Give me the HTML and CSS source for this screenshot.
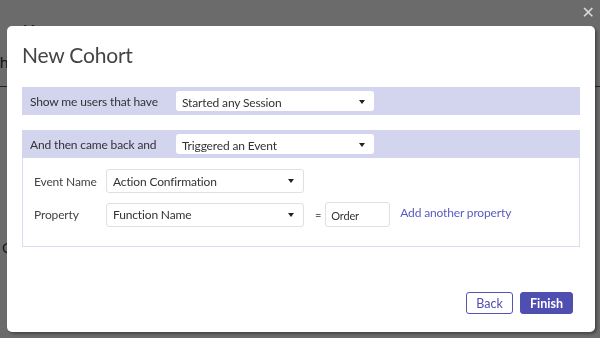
FILE: index.html
```html
<!DOCTYPE html>
<html lang="en">
<head>
    <meta charset="UTF-8">
    <meta name="viewport" content="width=device-width, initial-scale=1.0">
    <title>New Cohort</title>
    <link rel="stylesheet" href="styles.css">
</head>
<body>
    <div class="page">
        <div class="page-top">Y</div>
        <div class="page-row">th</div>
        <div class="page-foot">C</div>
    </div>
    <div class="overlay">
        <span class="close">&#x2715;</span>
        <div class="modal">
            <h1>New Cohort</h1>

            <div class="band">
                <span class="band-label">Show me users that have</span>
                <div class="select select-sm">
                    <span>Started any Session</span>
                    <span class="caret"></span>
                </div>
            </div>

            <div class="group">
                <div class="band">
                    <span class="band-label">And then came back and</span>
                    <div class="select select-sm">
                        <span>Triggered an Event</span>
                        <span class="caret"></span>
                    </div>
                </div>
                <div class="group-body">
                    <div class="field">
                        <span class="field-label">Event Name</span>
                        <div class="select select-lg">
                            <span>Action Confirmation</span>
                            <span class="caret"></span>
                        </div>
                    </div>
                    <div class="field">
                        <span class="field-label">Property</span>
                        <div class="select select-lg">
                            <span>Function Name</span>
                            <span class="caret"></span>
                        </div>
                        <span class="equals">=</span>
                        <div class="text-input">Order</div>
                        <a class="link" href="#">Add another property</a>
                    </div>
                </div>
            </div>

            <div class="footer">
                <button class="btn btn-outline">Back</button>
                <button class="btn btn-primary">Finish</button>
            </div>
        </div>
    </div>
</body>
</html>
```

FILE: styles.css
```css
body {
    margin: 0;
    font-family: Lato, "Open Sans", sans-serif;
    background-color: #fff;
    color: #333;
    overflow: hidden;
}
.page {
    height: 338px;
    color: #222;
    font-size: 16px;
}
.page-top {
    padding: 22px 0 0 24px;
    height: 28px;
    line-height: 16px;
}
.page-row {
    height: 36px;
    margin-left: -6px;
    border-bottom: 1px solid #555;
    line-height: 24px;
    color: #333;
}
.page-foot {
    margin-top: 152px;
    margin-left: 2px;
    font-size: 14px;
    color: #333;
}
.overlay {
    position: fixed;
    inset: 0;
    background-color: rgba(0, 0, 0, 0.58);
    padding: 26px 5px 6px 7px;
}
.close {
    position: absolute;
    top: 3px;
    right: 5px;
    color: #dadada;
    font-size: 16px;
    font-weight: bold;
    font-family: "DejaVu Sans", sans-serif;
}
.modal {
    background-color: #fff;
    border-radius: 5px;
    height: 306px;
    box-sizing: border-box;
    padding: 14px 15px 18px 15px;
    display: flex;
    flex-direction: column;
    box-shadow: 2px 2px 3px rgba(0, 0, 0, 0.35);
}
h1 {
    margin: 0 0 17px 0;
    font-size: 21px;
    line-height: 30px;
    letter-spacing: -0.2px;
    font-weight: normal;
    color: #444;
}
.band {
    background-color: #d3d4ed;
    display: flex;
    align-items: center;
    padding: 4px 0 4px 8px;
    height: 20px;
}
.band-label {
    width: 146px;
    font-size: 12px;
    letter-spacing: -0.15px;
    color: #333;
}
.select {
    background-color: #fff;
    border-radius: 3px;
    display: flex;
    align-items: center;
    justify-content: space-between;
    box-sizing: border-box;
    font-size: 12px;
    letter-spacing: -0.15px;
    color: #333;
}
.select-sm {
    width: 198px;
    height: 20px;
    padding: 2px 9px 0 6px;
}
.select-lg {
    width: 198px;
    height: 24px;
    padding: 0 9px 0 6px;
    border: 1px solid #e0e0e0;
}
.caret {
    width: 0;
    height: 0;
    border-left: 3px solid transparent;
    border-right: 3px solid transparent;
    border-top: 4px solid #222;
}
.group {
    margin-top: 15px;
    border: 1px solid #dcdcf0;
    border-top: none;
}
.group .band {
    margin: 0 -1px;
}
.group-body {
    padding: 11px 11px 19px 11px;
    display: flex;
    flex-direction: column;
    gap: 9px;
}
.field {
    display: flex;
    align-items: center;
    font-size: 12px;
    letter-spacing: -0.15px;
}
.field-label {
    width: 72px;
    color: #444;
}
.equals {
    margin: 0 4px 0 11px;
    color: #666;
    font-size: 11px;
}
.text-input {
    width: 65px;
    height: 25px;
    box-sizing: border-box;
    border: 1px solid #e0e0e0;
    border-radius: 3px;
    padding: 2px 0 0 5px;
    display: flex;
    align-items: center;
    font-size: 11px;
}
.link {
    margin-left: 10px;
    margin-top: -4px;
    color: #5a5ac2;
    text-decoration: none;
    font-size: 12px;
}
.footer {
    margin-top: auto;
    display: flex;
    justify-content: flex-end;
    gap: 7px;
    padding-right: 7px;
}
.btn {
    height: 22px;
    font-family: Lato, sans-serif;
    font-size: 12.5px;
    border-radius: 3px;
    padding: 0;
    cursor: pointer;
}
.btn-outline {
    width: 47px;
    background-color: #fff;
    border: 1px solid #5555b8;
    color: #4e4eb1;
}
.btn-primary {
    width: 53px;
    background-color: #4f4fb2;
    border: 1px solid #4f4fb2;
    color: #fff;
    font-weight: bold;
}
```
